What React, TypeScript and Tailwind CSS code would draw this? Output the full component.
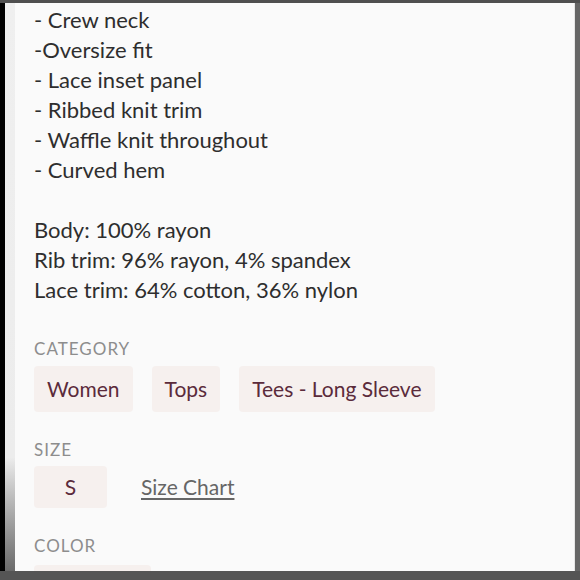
const details = [
  "- Crew neck",
  "-Oversize fit",
  "- Lace inset panel",
  "- Ribbed knit trim",
  "- Waffle knit throughout",
  "- Curved hem",
];

const fabric = [
  "Body: 100% rayon",
  "Rib trim: 96% rayon, 4% spandex",
  "Lace trim: 64% cotton, 36% nylon",
];

const categories = ["Women", "Tops", "Tees - Long Sleeve"];

const Label = ({ children }: { children: string }) => (
  <h4 className="text-[17px] leading-[20px] tracking-[0.06em] text-[#8d8d8d] uppercase">{children}</h4>
);

const Chip = ({ children, className = "" }: { children: string; className?: string }) => (
  <span
    className={`flex items-center rounded-[4px] bg-[#f6f0ee] px-[13px] text-[21px] text-[#5b2b3b] ${className}`}
  >
    {children}
  </span>
);

export default function App() {
  return (
    <div className="flex h-[580px] w-[580px] flex-col overflow-hidden bg-[#5a5a5a] font-['Lato',sans-serif]">
      <div className="h-[3px] shrink-0 bg-[#4f4f4f]" />
      <div className="flex min-h-0 flex-1">
        <div className="w-[5px] shrink-0 bg-black" />
        <div className="w-[10px] shrink-0 bg-linear-to-b from-[#efefef] via-[#ececec] via-80% to-[#6a6a6a]" />
        <div className="min-w-0 flex-1 overflow-hidden border-r border-[#e6e6e6] bg-[#fafafa] pl-[19px] text-[#2e2e2e]">
          <div className="-mt-[28px] text-[22px] leading-[30px]">
            <p className="text-[#555]">Soft jersey, relaxed, easy</p>
            {details.map((d) => (
              <p key={d}>{d}</p>
            ))}
            <p>&nbsp;</p>
            {fabric.map((f) => (
              <p key={f}>{f}</p>
            ))}
          </div>

          <div className="mt-[34px]">
            <Label>Category</Label>
            <div className="mt-[7px] flex gap-[19px]">
              {categories.map((c) => (
                <Chip key={c} className="h-[46px]">
                  {c}
                </Chip>
              ))}
            </div>
          </div>

          <div className="mt-[28px]">
            <Label>Size</Label>
            <div className="mt-[6px] flex items-center gap-[34px]">
              <Chip className="h-[42px] w-[73px] justify-center">S</Chip>
              <a className="text-[21px] text-[#666] underline underline-offset-[3px]">Size Chart</a>
            </div>
          </div>

          <div className="mt-[28px]">
            <Label>Color</Label>
            <div className="mt-[9px] flex h-[40px] w-[117px] items-center rounded-[4px] bg-[#f6f0ee] px-[14px]">
              <span className="h-[20px] w-[20px] rounded-full border border-[#999] bg-white" />
            </div>
          </div>
        </div>
        <div className="w-[5px] shrink-0 bg-[#666]" />
      </div>
      <div className="h-[9px] shrink-0 bg-[#555]" />
    </div>
  );
}
